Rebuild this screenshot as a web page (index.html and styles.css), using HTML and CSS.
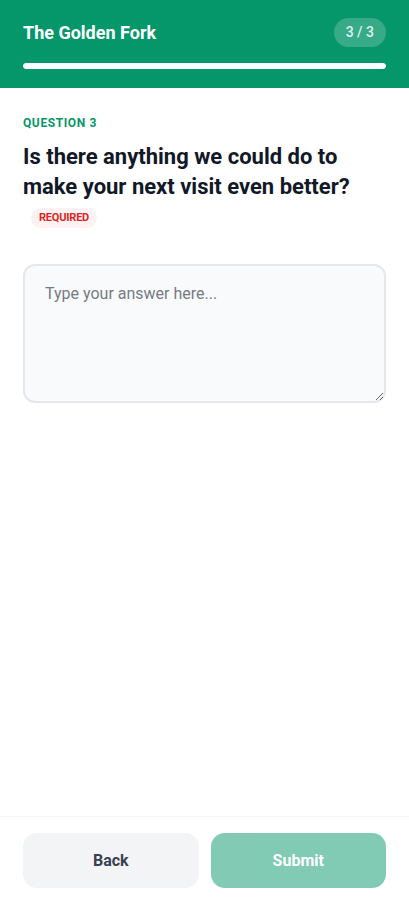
FILE: index.html
```html
<!DOCTYPE html>
<html lang="en">
<head>
<meta charset="utf-8">
<meta name="viewport" content="width=device-width, initial-scale=1">
<title>The Golden Fork</title>
<link rel="stylesheet" href="styles.css">
</head>
<body>
<div class="app">
  <header class="header">
    <div class="header-row">
      <h1 class="brand">The Golden Fork</h1>
      <span class="step">3 / 3</span>
    </div>
    <div class="progress"><div class="progress-fill" style="width:100%"></div></div>
  </header>
  <main class="content">
    <div class="q-label">QUESTION 3</div>
    <h2 class="q-title">Is there anything we could do to make your next visit even better? <span class="required">REQUIRED</span></h2>
    <textarea class="answer" placeholder="Type your answer here..."></textarea>
  </main>
  <footer class="footer">
    <button class="btn btn-back">Back</button>
    <button class="btn btn-submit">Submit</button>
  </footer>
</div>
</body>
</html>
```
FILE: styles.css
```css
* { box-sizing: border-box; }
html, body { margin: 0; padding: 0; }
body {
  font-family: Roboto, "Liberation Sans", Arial, sans-serif;
  background: #ffffff;
  color: #111827;
}
.app {
  height: 901px;
  display: flex;
  flex-direction: column;
}
.header {
  background: #059669;
  padding: 18px 23px 19px;
}
.header-row {
  display: flex;
  align-items: center;
  justify-content: space-between;
  height: 29px;
}
.brand {
  margin: 0;
  font-size: 18px;
  font-weight: 700;
  color: #ffffff;
  line-height: 24px;
}
.step {
  background: rgba(255, 255, 255, 0.2);
  color: rgba(255, 255, 255, 0.85);
  font-size: 14px;
  font-weight: 500;
  line-height: 21px;
  padding: 4px 12px;
  border-radius: 999px;
}
.progress {
  margin-top: 16px;
  height: 6px;
  background: rgba(255, 255, 255, 0.3);
  border-radius: 3px;
  overflow: hidden;
}
.progress-fill {
  height: 100%;
  background: #ffffff;
  border-radius: 3px;
}
.content {
  flex: 1;
  padding: 28px 23px 0;
}
.q-label {
  font-size: 12px;
  font-weight: 700;
  letter-spacing: 0.6px;
  color: #059669;
  line-height: 14px;
}
.q-title {
  margin: 12px 0 32px;
  font-size: 22px;
  font-weight: 700;
  line-height: 30px;
  color: #111827;
}
.required {
  display: inline-block;
  vertical-align: middle;
  margin-left: 8px;
  font-size: 11px;
  font-weight: 700;
  line-height: 16px;
  padding: 2px 8px;
  border-radius: 999px;
  background: #fef2f2;
  color: #dc2626;
  letter-spacing: -0.2px;
}
.answer {
  display: block;
  width: 100%;
  height: 139px;
  border: 2px solid #e5e7eb;
  border-radius: 12px;
  background: #f9fafb;
  padding: 16px 20px;
  font-family: Roboto, "Liberation Sans", Arial, sans-serif;
  font-size: 16px;
  line-height: 24px;
  color: #111827;
  resize: vertical;
  outline: none;
}
.answer::placeholder { color: #757b85; }
.footer {
  border-top: 1px solid #f3f4f6;
  padding: 16px 23px 13px;
  display: flex;
  gap: 12px;
}
.btn {
  flex: 1;
  height: 55px;
  border: none;
  border-radius: 14px;
  font-family: Roboto, "Liberation Sans", Arial, sans-serif;
  font-size: 16px;
  font-weight: 700;
}
.btn-back {
  background: #f3f4f6;
  color: #374151;
}
.btn-submit {
  background: #059669;
  color: #ffffff;
  opacity: 0.5;
}
```
